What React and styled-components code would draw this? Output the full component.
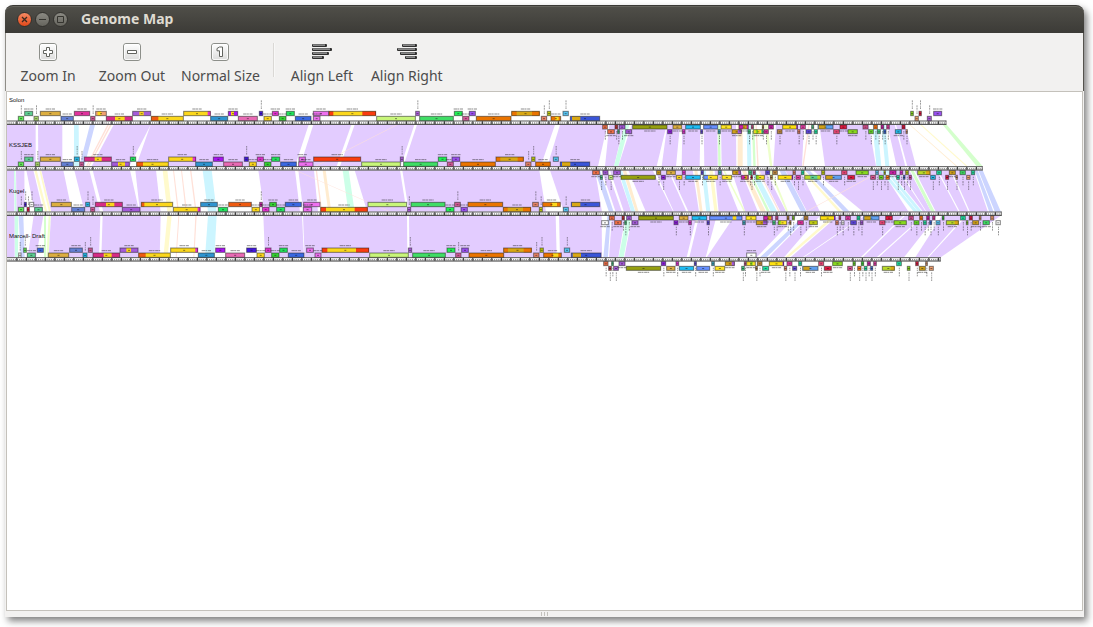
import React from "react";
import styled, { createGlobalStyle } from "styled-components";

const GlobalStyle = createGlobalStyle`
  * { box-sizing: border-box; }
  body { margin: 0; background: #ffffff; font-family: "Noto Sans", "Open Sans", sans-serif; }
`;

const Desktop = styled.div`
  display: flex;
  min-height: 100vh;
  padding: 5px 9px 10px 5px;
`;

const Window = styled.main`
  flex: 1;
  min-width: 0;
  display: flex;
  flex-direction: column;
  background: #f2f1f0;
  border-radius: 8px 8px 0 0;
  box-shadow: 3px 4px 7px rgba(0, 0, 0, 0.5);
`;

const TitleBar = styled.header`
  display: flex;
  align-items: center;
  gap: 3px;
  height: 28px;
  padding: 0 12px;
  border-radius: 8px 8px 0 0;
  background: linear-gradient(#504f49, #3c3b37);
  border-top: 1px solid #3a3935;
  box-shadow: inset 0 1px 0 #65645d;
`;

const WindowButton = styled.button`
  width: 15px;
  height: 15px;
  padding: 0;
  border: 1px solid #33322e;
  border-radius: 50%;
  background: ${(p) => (p.$close ? "linear-gradient(#f68a63, #e2491a)" : "linear-gradient(#8b8a83, #66655e)")};
  svg { display: block; }
`;

const Title = styled.h1`
  margin: 0 0 0 10px;
  font-size: 14px;
  line-height: 18px;
  padding-bottom: 2px;
  font-weight: 700;
  color: #dfdbd2;
`;

const Toolbar = styled.nav`
  display: flex;
  height: 58px;
  padding: 8px 0 4px;
  border-left: 1px solid #8f8d87;
  border-right: 1px solid #55534e;
`;

const ToolButton = styled.button`
  display: flex;
  flex-direction: column;
  align-items: center;
  gap: 5px;
  min-width: 84px;
  padding: 2px 7px 0;
  border: 0;
  background: none;
  color: #4c4c4c;
  font: 14px/20px "Noto Sans", "Open Sans", sans-serif;
  white-space: nowrap;
`;

const Separator = styled.hr`
  width: 2px;
  height: 34px;
  margin: 2px 5px 0 6px;
  border: 0;
  border-left: 1px solid #dad8d5;
  border-right: 1px solid #f8f8f7;
`;

const MapFrame = styled.section`
  flex: 1;
  overflow: hidden;
  margin: 0 1px;
  background: #ffffff;
  border: 1px solid #c4c1bb;
  svg { display: block; }
`;

const PaneGrip = styled.footer`
  display: flex;
  justify-content: center;
  align-items: center;
  gap: 2px;
  height: 6px;
`;

const Notch = styled.i`
  width: 1px;
  height: 4px;
  background: #c3c1bc;
`;

function KeyIcon({ kind }) {
  const shapes = {
    plus: "M7.5 4.5h3v3h3v3h-3v3h-3v-3h-3v-3h3z",
    minus: "M4.5 7.5h9v3h-9z",
    one: "M6 5.5 8.5 4h3v9.5h-3V7.8H6z",
  };
  return (
    <svg width="18" height="18" viewBox="0 0 18 18" aria-hidden="true">
      <defs>
        <linearGradient id={"key-" + kind} x1="0" y1="0" x2="0" y2="1">
          <stop offset="0" stopColor="#ffffff" />
          <stop offset="1" stopColor="#dcdcdb" />
        </linearGradient>
      </defs>
      <rect x="0.5" y="0.5" width="17" height="17" rx="2.5" fill={`url(#key-${kind})`} stroke="#8d8f8a" />
      <rect x="1.5" y="1.5" width="15" height="15" rx="1.5" fill="none" stroke="#ffffff" strokeOpacity=".8" />
      <path d={shapes[kind]} fill="#fff" stroke="#62645f" />
    </svg>
  );
}

function AlignIcon({ right }) {
  return (
    <svg width="20" height="18" viewBox="0 0 20 18" aria-hidden="true">
      {[15, 20, 17, 12].map((w, i) => {
        const x = right ? 20 - w : 0;
        const y = 1 + i * 4;
        return (
          <g key={y}>
            <rect x={x} y={y} width={w} height="3" rx="1" fill="#303030" />
            <rect x={x + 1} y={y + 0.5} width={w - 3} height="1.2" fill="#b0b0b0" />
          </g>
        );
      })}
    </svg>
  );
}

/* ---------- genome data ---------- */

const C = {
  g: "#62ec58", t: "#5dcf92", o: "#a8d86a", au: "#dcae40", b: "#6480d4", m: "#e0329c", p: "#d25a98",
  cy: "#25b8e8", ma: "#d62c86", v: "#a45bd8", y: "#fbd71c", or: "#ee5a10", bl: "#2f94d0", vi: "#a815f0",
  pk: "#e86ab4", i: "#4318e0", fu: "#e332cf", gr: "#35d332", em: "#22e35c", ro: "#3a68e2", or2: "#ee70ef",
  rd: "#f93c10", li: "#c8f67a", la: "#b060e0", gn: "#40dd66", ng: "#22ee55", vt: "#9a50f0", og: "#ea7400",
  go: "#d9a814", sa: "#e88468", ol: "#c0cc10", sk: "#58c4f2", dk: "#3a55d8", co: "#f07048", re: "#c83838",
  mo: "#96a010", pu: "#9020e0", ca: "#20bdf5", cb: "#6690ff", te: "#40a8c0", le: "#ffe525", tg: "#40d080",
  br: "#c08840", cr: "#e01840", ra: "#f04878", ap: "#88d820", in: "#6048e0", sg: "#20e0a0", fb: "#60a0f0",
  tg2: "#ff7810", mg: "#cc20a8", hp: "#e83ca4", pe: "#f0a070", w: "#ffffff", su: "#fde010", cl: "#b8d828",
  gd: "#d0a018", st: "#d85090", sl: "#68d828", lb: "#3868d8",
};

const L = (origin, genes) => genes.map(([x, w, lane, color, parts]) => ({
  x: origin + x, w, lane, color, parts: (parts || []).map(([px, pw, pc]) => [origin + px, pw, pc]),
}));

const TRACKS = [
  {
    name: "Solon", ruler: 92, end: 2839,
    fwd: [
      ...L(0, [[54, 18, 1, "g"], [73, 26, 0, "t"], [101, 15, 1, "o"], [120, 62, 0, "au"], [182, 39, 1, "b"], [222, 48, 0, "m"], [271, 15, 1, "p"], [286, 34, 0, "pe", [[292, 12, "y"]]], [318, 80, 1, "ma", [[344, 30, "y"]]], [397, 56, 0, "v", [[417, 14, "y"]]], [453, 98, 1, "y", [[453, 22, "or"]]], [550, 82, 0, "y", [[622, 10, "fu"]]]]),
      ...L(630, [[1, 53, 1, "bl"], [54, 30, 0, "vi", [[62, 10, "y"]]], [84, 59, 1, "pk"], [147, 12, 0, "i"], [161, 24, 1, "y"], [186, 20, 0, "fu"], [207, 22, 1, "gr"], [228, 26, 0, "em"], [255, 49, 1, "ro"], [309, 48, 0, "or2"], [309, 22, 1, "or2"], [356, 142, 0, "y", [[356, 14, "rd"], [456, 42, "rd"]]], [499, 118, 1, "li"], [616, 13, 0, "la"], [628, 103, 1, "gn"]]),
      ...L(1260, [[102, 26, 0, "ng"], [127, 21, 1, "p"], [147, 20, 0, "vt"], [168, 106, 1, "og"], [274, 85, 0, "go", [[274, 16, "og"], [335, 24, "og"]]], [363, 18, 1, "sa"], [381, 12, 0, "ol"], [392, 31, 1, "og", [[405, 11, "y"]]], [428, 18, 0, "sk"], [450, 90, 1, "dk", [[455, 26, "go"]]]]),
      ...L(2610, [[121, 10, 0, "ap"], [134, 12, 1, "pe"], [146, 9, 0, "cr"], [171, 14, 1, "la"], [190, 26, 0, "vt"]]),
    ],
    rev: [
      ...L(1770, [[37, 16, 0, "co"], [52, 22, 1, "co"], [74, 10, 0, "re"], [82, 7, 1, "tg"], [87, 19, 0, "v"], [106, 20, 1, "v"], [127, 105, 0, "mo"], [232, 15, 1, "pu"], [248, 28, 0, "au"], [276, 10, 1, "fu"], [286, 46, 0, "ca"], [331, 8, 1, "in"], [340, 44, 0, "cb"], [383, 9, 1, "te"], [392, 33, 0, "le"]]),
      ...L(2190, [[5, 30, 1, "gd", [[22, 13, "v"]]], [26, 30, 0, "mg", [[38, 12, "gd"]]], [53, 9, 1, "tg"], [63, 8, 0, "st"], [70, 30, 1, "le", [[76, 8, "ap"], [93, 7, "tg"]]], [96, 6, 0, "br"], [101, 15, 1, "m"], [115, 16, 0, "mg"], [141, 16, 1, "br"], [157, 46, 0, "su", [[198, 5, "pu"]]], [202, 9, 1, "sa"], [211, 16, 0, "hp"], [227, 18, 1, "in"], [244, 8, 0, "t"], [252, 11, 1, "sg"], [263, 47, 0, "fb", [[265, 22, "gd"]]], [310, 19, 1, "ra"], [329, 22, 0, "cr"], [353, 30, 1, "ap"], [398, 17, 0, "st"], [415, 16, 1, "sl"], [430, 13, 0, "tg2"], [441, 11, 1, "tg"]]),
      ...L(2610, [[32, 10, 0, "mg"], [40, 9, 1, "lb"], [49, 10, 0, "hp"], [75, 20, 1, "cy"], [95, 11, 0, "cr"], [107, 6, 1, "pe"]]),
    ],
  },
  {
    name: "KSSJEB", ruler: 229, end: 2948,
    fwd: [
      ...L(0, [[54, 18, 1, "g"], [73, 27, 0, "t"], [105, 15, 1, "o"], [120, 62, 0, "au"], [183, 38, 1, "b"], [222, 17, 0, "cy"], [238, 14, 1, "p"], [252, 83, 0, "ma", [[283, 22, "y"]]], [334, 55, 1, "v", [[353, 22, "y"]]], [390, 18, 0, "em"], [409, 97, 1, "y", [[409, 20, "or"]]], [505, 83, 0, "y", [[577, 11, "fu"]]], [586, 52, 1, "bl"]]),
      ...L(630, [[9, 32, 0, "vi"], [40, 58, 1, "pk"], [102, 14, 0, "i"], [117, 23, 1, "y"], [141, 20, 0, "fu"], [162, 22, 1, "gr"], [184, 26, 0, "em"], [211, 49, 1, "ro"], [266, 21, 0, "or2"], [265, 45, 1, "or2"], [310, 143, 0, "rd"], [454, 118, 1, "li"], [570, 11, 0, "la"], [580, 104, 1, "gn"]]),
      ...L(1260, [[54, 27, 0, "ng"], [81, 20, 1, "p"], [95, 25, 0, "vt"], [121, 106, 1, "og"], [227, 84, 0, "go", [[227, 14, "og"], [292, 19, "og"]]], [316, 18, 1, "sa"], [334, 12, 0, "ol"], [346, 46, 1, "og"], [399, 17, 0, "sk"], [420, 90, 1, "dk", [[425, 26, "go"]]]]),
    ],
    rev: [
      ...L(1770, [[7, 22, 0, "co"], [30, 8, 1, "tg"], [38, 17, 0, "v"], [55, 15, 1, "li"], [70, 22, 0, "v"], [92, 105, 1, "mo"], [199, 14, 0, "gd"], [213, 14, 1, "pu"], [229, 28, 0, "au"], [258, 19, 1, "y"], [276, 11, 0, "fu"], [286, 46, 1, "ca"], [332, 9, 0, "in"], [340, 44, 1, "le", [[340, 14, "cb"]]], [384, 11, 0, "te"], [395, 31, 1, "le"]]),
      ...L(2190, [[7, 25, 0, "gd", [[24, 8, "v"]]], [33, 23, 1, "mg", [[43, 9, "gd"]]], [55, 11, 0, "tg"], [62, 6, 1, "cr"], [68, 9, 0, "st"], [77, 27, 1, "le", [[77, 9, "ap"]]], [106, 14, 0, "in"], [120, 8, 1, "br"], [127, 16, 0, "br"], [143, 46, 1, "su", [[184, 5, "pu"]]], [188, 9, 0, "sa"], [197, 15, 1, "hp"], [213, 10, 0, "sg"], [223, 50, 1, "cl", [[240, 22, "t"]]], [274, 11, 0, "ol"], [286, 49, 1, "fb", [[286, 22, "gd"]]], [334, 18, 0, "ra"], [352, 23, 1, "cr"], [377, 39, 0, "ap"], [421, 16, 1, "st"], [436, 10, 0, "sk"]]),
      ...L(2610, [[26, 15, 1, "sl"], [41, 6, 0, "ol"], [47, 12, 1, "tg2"], [58, 21, 0, "mg"], [79, 10, 1, "sg"], [89, 10, 0, "fu"], [99, 7, 1, "lb"], [106, 10, 0, "ol"], [116, 9, 1, "hp"], [142, 39, 0, "cl", [[167, 14, "go"]]], [181, 16, 1, "cy"], [199, 16, 0, "sg"], [226, 11, 1, "cr"], [237, 20, 0, "gd"], [257, 6, 1, "pe"], [269, 18, 0, "gn"], [289, 12, 1, "pe"], [303, 12, 0, "sg"]]),
    ],
  },
  {
    name: "Kugel", ruler: 365, end: 3005,
    fwd: [
      ...L(0, [[54, 18, 1, "g"], [72, 8, 0, "i"], [80, 9, 1, "cr"], [88, 14, 0, "w"], [103, 25, 1, "t"], [153, 62, 0, "au"], [214, 41, 1, "b"], [256, 14, 0, "cy"], [271, 14, 1, "p"], [285, 83, 0, "ma", [[317, 26, "y"]]], [366, 55, 1, "v"], [423, 96, 0, "y", [[423, 10, "or"]]], [519, 82, 1, "y", [[592, 9, "fu"]]], [601, 52, 0, "bl"]]),
      ...L(630, [[24, 30, 1, "em"], [55, 70, 0, "or"], [125, 25, 1, "y"], [148, 10, 0, "mg"], [156, 22, 1, "fu"], [178, 22, 0, "gr"], [199, 26, 1, "em"], [225, 50, 0, "ro"], [280, 51, 0, "or2"], [279, 27, 1, "or2"], [331, 142, 1, "y", [[331, 17, "rd"], [433, 40, "rd"]]], [473, 118, 0, "li"], [591, 12, 1, "la"], [602, 104, 0, "gn"]]),
      ...L(1260, [[77, 26, 1, "ng"], [103, 19, 0, "p"], [122, 21, 1, "vt"], [143, 106, 0, "og"], [249, 84, 1, "go", [[249, 14, "og"], [308, 25, "og"]]], [337, 19, 0, "sa"], [357, 11, 1, "ol"], [367, 55, 0, "og", [[395, 16, "y"]]], [429, 17, 1, "sk"], [453, 87, 0, "dk", [[455, 26, "go"]]]]),
    ],
    rev: [
      ...L(1770, [[34, 22, 1, "w"], [57, 17, 0, "co"], [73, 22, 1, "co"], [95, 9, 0, "re"], [103, 7, 1, "tg"], [109, 16, 0, "v"], [125, 20, 1, "v"], [145, 106, 0, "mo"], [251, 14, 1, "pu"], [267, 28, 0, "au"], [295, 10, 1, "fu"], [305, 46, 0, "ca"], [350, 9, 1, "in"], [358, 99, 0, "cb", [[427, 12, "y"]]]]),
      ...L(2190, [[37, 10, 1, "te"], [47, 32, 0, "le"], [78, 34, 1, "gd", [[98, 14, "v"]]], [100, 28, 0, "mg", [[112, 12, "gd"]]], [127, 10, 1, "tg"], [136, 9, 0, "st"], [144, 27, 1, "le", [[144, 8, "ap"]]], [170, 8, 0, "br"], [178, 6, 1, "br"], [186, 8, 0, "ap"], [202, 19, 1, "m"], [221, 14, 0, "br"], [237, 26, 1, "ol"], [270, 46, 0, "su", [[311, 5, "pu"]]], [316, 10, 1, "sa"], [326, 7, 0, "st"], [334, 9, 1, "w"], [346, 16, 0, "hp"], [361, 19, 1, "in"], [380, 11, 0, "sg"], [390, 10, 1, "v"], [400, 48, 0, "fb", [[402, 20, "gd"]]]]),
      ...L(2610, [[28, 18, 1, "ra"], [46, 22, 0, "cr"], [71, 39, 1, "ap"], [115, 16, 0, "st"], [131, 17, 1, "sl"], [148, 11, 0, "tg2"], [159, 11, 1, "sg"], [169, 10, 0, "mg"], [178, 8, 1, "lb"], [187, 9, 0, "hp"], [197, 14, 1, "sk"], [216, 7, 0, "gr"], [228, 38, 1, "cl", [[253, 13, "go"]]], [271, 16, 0, "sg"], [288, 7, 1, "ap"], [297, 11, 0, "cr"], [307, 20, 1, "gd"], [327, 7, 0, "pe"], [338, 21, 1, "gn"], [361, 11, 0, "pe"], [377, 15, 1, "w"]]),
    ],
  },
  {
    name: "Marcell- Draft", ruler: 502, end: 2822,
    fwd: [
      ...L(0, [[55, 9, 1, "w"], [70, 10, 0, "g"], [81, 26, 1, "t"], [111, 20, 0, "ro"], [144, 63, 1, "au"], [208, 40, 0, "b"], [248, 14, 1, "cy"], [264, 14, 0, "p"], [278, 82, 1, "ma", [[310, 25, "y"]]], [359, 56, 0, "v", [[378, 15, "y"]]], [415, 97, 1, "y", [[415, 22, "or"]]], [511, 83, 0, "y", [[585, 9, "fu"]]], [594, 50, 1, "bl"]]),
      ...L(630, [[16, 30, 0, "vi"], [46, 59, 1, "pk"], [109, 31, 0, "i"], [140, 24, 1, "y"], [165, 19, 0, "fu"], [184, 24, 1, "gr"], [208, 25, 0, "em"], [234, 49, 1, "ro"], [289, 22, 0, "or2"], [314, 20, 1, "or2"], [335, 142, 0, "y", [[335, 17, "rd"], [437, 40, "rd"]]], [478, 118, 1, "li"], [594, 12, 0, "la"], [607, 100, 1, "gn"]]),
      ...L(1260, [[80, 26, 0, "ng"], [106, 18, 1, "p"], [124, 22, 0, "vt"], [146, 106, 1, "og"], [250, 85, 0, "go", [[250, 14, "og"], [310, 25, "og"]]], [340, 18, 1, "sa"], [359, 12, 0, "ol"], [370, 55, 1, "og", [[398, 17, "y"]]], [432, 18, 0, "sk"], [453, 91, 1, "dk", [[457, 26, "go"]]]]),
      ...L(2190, [[49, 30, 1, "w"]]),
    ],
    rev: [
      ...L(1770, [[40, 15, 0, "co"], [55, 10, 1, "re"], [64, 7, 0, "tg"], [70, 16, 1, "v"], [86, 20, 0, "v"], [108, 105, 1, "mo"], [213, 15, 0, "pu"], [229, 27, 1, "au"], [257, 10, 0, "fu"], [267, 45, 1, "ca"], [312, 8, 0, "in"], [319, 41, 1, "cb"], [364, 10, 0, "te"], [374, 31, 1, "le"], [405, 29, 0, "gd", [[424, 10, "v"]]]]),
      ...L(2190, [[34, 10, 1, "tg"], [42, 7, 0, "st"], [49, 28, 0, "le", [[60, 8, "ap"]]], [76, 7, 1, "br"], [81, 16, 0, "br"], [97, 20, 1, "sg"], [117, 45, 0, "su", [[157, 5, "pu"]]], [162, 9, 1, "sa"], [170, 17, 0, "hp"], [187, 14, 1, "in"], [205, 11, 0, "sg"], [217, 48, 1, "fb", [[219, 20, "gd"]]], [265, 17, 0, "ra"], [282, 23, 1, "cr"], [307, 31, 0, "ap"], [352, 16, 1, "st"], [368, 9, 0, "sl"], [382, 12, 1, "tg2"], [393, 9, 0, "gr"], [402, 10, 1, "sg"], [411, 11, 0, "mg"], [421, 8, 1, "lb"], [430, 10, 0, "hp"]]),
      ...L(2610, [[36, 38, 1, "cl", [[61, 13, "go"]]], [79, 16, 0, "sg"], [111, 10, 1, "ap"], [136, 10, 0, "cr"], [147, 20, 1, "gd"], [166, 7, 0, "pe"], [177, 14, 1, "pe"]]),
    ],
  },
];

const TINT = {
  p: "#e3ccff", b: "#ccd5ff", c: "#ccf5ff", t: "#ccffe8", g: "#d4ffcc", l: "#eeffcc", y: "#fffacc", o: "#ffecd0", r: "#ffe1d8",
};

const R = (origin, ribbons) => ribbons.map(([tint, a, b, c, d]) => [tint, origin + a, origin + b, origin + c, origin + d]);

/* Shared regions between neighbouring genomes: tint, upper edge from/to, lower edge from/to. */
const BANDS = [
  {
    top: 104, bottom: 229,
    ribbons: [
      ...R(0, [["p", 21, 107, 21, 107], ["p", 114, 187, 115, 187], ["c", 222, 236, 222, 237], ["b", 270, 285, 238, 253], ["r", 322, 327, 258, 262], ["r", 330, 335, 264, 268], ["p", 341, 452, 275, 388], ["p", 452, 926, 408, 885]]),
      ...R(630, [["p", 310, 424, 270, 380], ["p", 434, 613, 390, 572], ["p", 621, 1035, 580, 992], ["r", 560, 563, 315, 318]]),
      ...R(1260, [["p", 420, 562, 382, 534]]),
      ...R(1770, [["p", 58, 102, 45, 72], ["t", 104, 118, 72, 85], ["p", 125, 230, 85, 200], ["p", 232, 270, 215, 258], ["p", 277, 331, 275, 329], ["p", 341, 382, 343, 383], ["g", 383, 390, 385, 392], ["p", 393, 438, 395, 439], ["o", 443, 450, 443, 450]]),
      ...R(2190, [["o", 25, 38, 26, 38], ["c", 50, 62, 52, 64], ["g", 66, 73, 70, 77], ["r", 76, 80, 82, 86], ["l", 104, 112, 120, 127], ["p", 138, 222, 130, 216], ["r", 235, 239, 217, 221], ["p", 268, 416, 285, 438], ["c", 428, 440, 440, 452]]),
      ...R(2610, [["c", 8, 22, 20, 34], ["c", 34, 46, 46, 58], ["p", 52, 74, 80, 106], ["p", 78, 105, 112, 138], ["o", 118, 121, 258, 262], ["y", 150, 155, 288, 293], ["g", 218, 230, 320, 338]]),
    ],
  },
  {
    top: 241, bottom: 366,
    ribbons: [
      ...R(0, [["p", 21, 42, 21, 43], ["t", 42, 46, 44, 50], ["p", 48, 73, 50, 74], ["p", 79, 100, 104, 130], ["y", 103, 110, 135, 142], ["y", 118, 123, 147, 153], ["p", 124, 190, 154, 216], ["p", 223, 268, 254, 300], ["p", 278, 390, 310, 418], ["p", 406, 468, 420, 482], ["y", 488, 502, 502, 516], ["r", 519, 522, 533, 537], ["r", 543, 546, 557, 561], ["r", 570, 574, 586, 590], ["c", 608, 635, 624, 650]]),
      ...R(630, [["p", 145, 255, 163, 270], ["p", 265, 312, 280, 324], ["r", 317, 321, 333, 337], ["o", 338, 347, 355, 364], ["t", 398, 416, 415, 434], ["p", 434, 570, 472, 590], ["p", 577, 988, 597, 1008], ["r", 255, 258, 540, 543]]),
      ...R(1260, [["p", 390, 525, 432, 546]]),
      ...R(1770, [["b", 14, 30, 57, 71], ["p", 35, 52, 77, 96], ["p", 60, 82, 102, 124], ["c", 85, 96, 124, 136], ["o", 98, 108, 137, 146], ["p", 115, 188, 168, 250], ["p", 195, 234, 252, 290], ["p", 238, 308, 296, 327], ["o", 313, 322, 330, 338], ["c", 335, 347, 349, 361], ["y", 358, 368, 373, 383], ["p", 374, 396, 386, 446], ["l", 399, 404, 462, 467]]),
      ...R(2190, [["p", 4, 32, 46, 84], ["o", 35, 47, 93, 108], ["g", 52, 58, 112, 120], ["c", 60, 76, 123, 142], ["r", 84, 87, 146, 150], ["p", 88, 105, 152, 169], ["l", 118, 124, 169, 175], ["b", 148, 165, 213, 230], ["p", 166, 210, 232, 270], ["y", 213, 221, 326, 336], ["b", 225, 238, 342, 360], ["p", 248, 455, 400, 536], ["r", 455, 459, 225, 228]]),
      ...R(2610, [["c", 30, 40, 132, 144], ["c", 44, 54, 145, 157], ["p", 58, 85, 160, 168], ["p", 90, 118, 170, 184], ["g", 121, 130, 184, 195], ["p", 134, 200, 198, 266], ["p", 204, 240, 270, 296], ["p", 245, 311, 300, 354], ["b", 314, 323, 358, 371], ["b", 325, 338, 375, 393]]),
    ],
  },
  {
    top: 377, bottom: 502,
    ribbons: [
      ...R(0, [["p", 21, 44, 21, 44], ["t", 44, 55, 45, 54], ["b", 56, 70, 62, 74], ["p", 101, 130, 83, 108], ["g", 132, 138, 132, 138], ["l", 146, 152, 139, 146], ["p", 153, 301, 146, 297], ["p", 308, 482, 304, 479], ["y", 502, 515, 490, 503], ["r", 535, 538, 527, 530], ["r", 586, 590, 580, 583], ["c", 624, 650, 615, 643]]),
      ...R(630, [["p", 160, 276, 165, 282], ["p", 279, 591, 284, 592], ["p", 597, 1037, 598, 1040]]),
      ...R(1260, [["p", 417, 545, 420, 546]]),
      ...R(1770, [["b", 52, 62, 40, 54], ["p", 66, 106, 57, 85], ["t", 110, 124, 86, 101], ["p", 127, 320, 103, 290], ["p", 328, 380, 298, 347], ["p", 434, 620, 350, 500]]),
      ...R(2190, [["b", 222, 236, 90, 110], ["p", 240, 270, 116, 162], ["y", 308, 320, 166, 176], ["p", 324, 400, 182, 218], ["p", 404, 520, 222, 392]]),
      ...R(2610, [["p", 105, 160, -22, 20], ["p", 164, 200, 26, 102], ["p", 216, 284, 136, 172], ["p", 290, 392, 176, 212]]),
    ],
  },
];

function Gene({ gene, y, h, above }) {
  const middle = gene.x + gene.w / 2;
  const wide = gene.w >= 20;
  const labelHalf = gene.w > 90 ? 17 : 14;
  const edge = above ? y - 6 : y + h + 6;
  const far = above ? y - 33 : y + h + 33;
  return (
    <g>
      <rect x={gene.x + 1} y={y + 1} width={gene.w - 2} height={h - 1} fill={C[gene.color]} />
      {gene.parts.map(([x, w, color]) => (
        <rect key={x} x={x + 1} y={y + 1} width={w - 1} height={h - 1} fill={C[color]} />
      ))}
      <rect x={gene.x + 1} y={y + 1} width={gene.w - 2} height={h - 1} fill="none" stroke="#222" strokeOpacity=".55" strokeWidth="3" />
      <path d={`M${middle - 3} ${y + h / 2 + 1}h6`} stroke="#111" strokeOpacity=".5" strokeWidth="3" />
      <path
        d={wide ? `M${middle - labelHalf} ${edge}h${labelHalf * 2}` : `M${middle + 1} ${edge}V${far}`}
        stroke="#222"
        strokeOpacity={wide ? 0.5 : 0.45}
        strokeWidth="3"
        strokeDasharray={wide ? "10 1 6 2" : "5 2 3 3 6 2"}
      />
    </g>
  );
}

function Track({ track }) {
  const { ruler, end } = track;
  return (
    <g>
      <rect x="21" y={ruler} width={end - 21} height="12" fill="#fff" />
      <path d={`M21 ${ruler + 1}H${end}`} stroke="#555" strokeWidth="3" />
      <path d={`M23 ${ruler + 7}H${end}`} stroke="#333" strokeOpacity=".8" strokeWidth="4" strokeDasharray="2 3.7" />
      <path d={`M49 ${ruler + 6}H${end}`} stroke="#222" strokeWidth="8" strokeDasharray="3 25.5" />
      <path d={`M21 ${ruler + 11}H${end}`} stroke="#333" strokeWidth="3" />
      <path d={`M${end - 1} ${ruler}v12`} stroke="#444" strokeWidth="2" />
      {track.fwd.map((g) => (
        <Gene key={g.x + "-" + g.lane} gene={g} y={ruler - 29 + g.lane * 15} h={14} above />
      ))}
      {track.rev.map((g) => (
        <Gene key={g.x + "-" + g.lane} gene={g} y={ruler + 12 + g.lane * 14} h={13} />
      ))}
      <text x="27" y={ruler - 57} fontFamily="Liberation Sans, sans-serif" fontSize="18" fill="#111">{track.name}</text>
    </g>
  );
}

function GenomeMap() {
  return (
    <svg width="1000" height="200" viewBox="21 6 3000 600" role="img" aria-label="Genome Map">
      {BANDS.map((band) => band.ribbons.map(([tint, a, b, c, d], i) => (
        <path key={band.top + "-" + i} d={`M${a} ${band.top}H${b}L${d} ${band.bottom}H${c}Z`} fill={TINT[tint]} />
      )))}
      {TRACKS.map((track) => <Track key={track.name} track={track} />)}
    </svg>
  );
}

export default function App() {
  return (
    <Desktop>
      <GlobalStyle />
      <Window>
        <TitleBar>
          <WindowButton $close aria-label="Close">
            <svg width="13" height="13" viewBox="0 0 13 13"><path d="M4 4l5 5M9 4l-5 5" stroke="#3c2a20" strokeWidth="1.3" /></svg>
          </WindowButton>
          <WindowButton aria-label="Minimize">
            <svg width="13" height="13" viewBox="0 0 13 13"><path d="M3 6.5h7" stroke="#35342f" /></svg>
          </WindowButton>
          <WindowButton aria-label="Maximize">
            <svg width="13" height="13" viewBox="0 0 13 13"><path d="M3.5 3.5h6v6h-6z" fill="none" stroke="#35342f" /></svg>
          </WindowButton>
          <Title>Genome Map</Title>
        </TitleBar>
        <Toolbar>
          <ToolButton><KeyIcon kind="plus" />Zoom In</ToolButton>
          <ToolButton><KeyIcon kind="minus" />Zoom Out</ToolButton>
          <ToolButton><KeyIcon kind="one" />Normal Size</ToolButton>
          <Separator />
          <ToolButton><AlignIcon />Align Left</ToolButton>
          <ToolButton><AlignIcon right />Align Right</ToolButton>
        </Toolbar>
        <MapFrame>
          <GenomeMap />
        </MapFrame>
        <PaneGrip><Notch /><Notch /><Notch /></PaneGrip>
      </Window>
    </Desktop>
  );
}
